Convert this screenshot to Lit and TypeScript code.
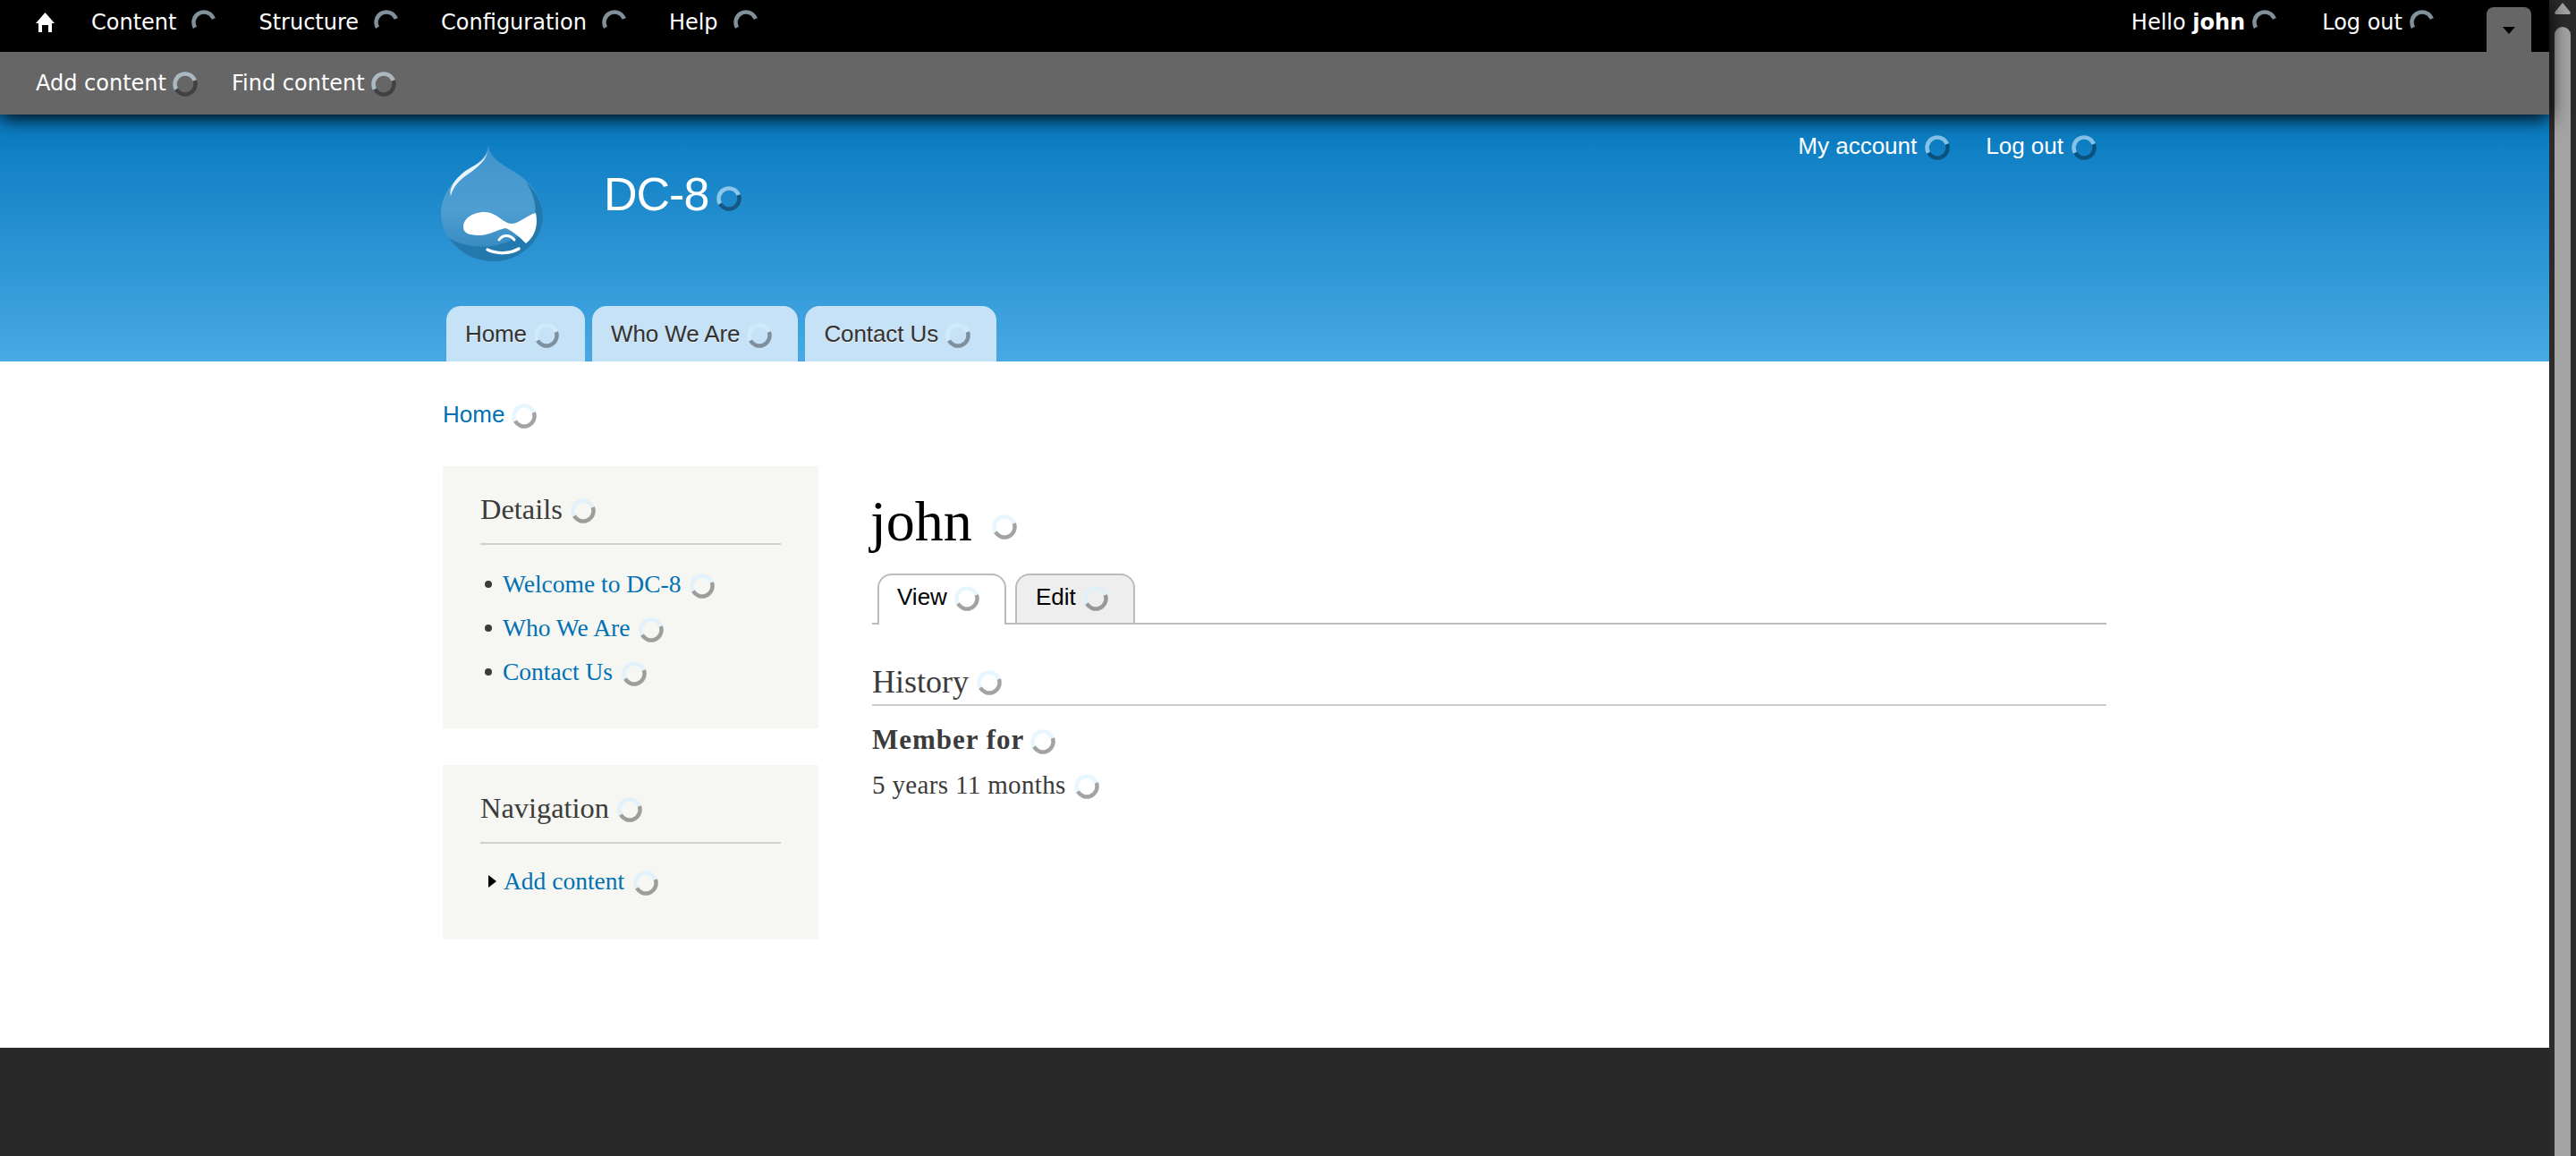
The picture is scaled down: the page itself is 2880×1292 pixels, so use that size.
import { LitElement, html, css } from "lit";
import { customElement } from "lit/decorators.js";

const sp = (cls = "") => html`<svg class="sp ${cls}" viewBox="0 0 28 28"><circle class="a" cx="14" cy="14" r="11.5" pathLength="360" stroke-dasharray="190 170" transform="rotate(150 14 14)"></circle><circle class="b" cx="14" cy="14" r="11.5" pathLength="360" stroke-dasharray="170 190" transform="rotate(-20 14 14)"></circle></svg>`;

@customElement("app-root")
export class AppRoot extends LitElement {
  static styles = css`
    :host { display: block; height: 1292px; overflow: hidden; font-family: "Liberation Serif", serif; color: #3b3b3b; background: #fff; }
    * { box-sizing: border-box; }
    a { text-decoration: none; color: inherit; }
    .page { display: flex; height: 1292px; }
    .col { width: 2850px; display: flex; flex-direction: column; }
    .sp { width: 28px; height: 28px; flex: none; fill: none; stroke-width: 4.5; margin-top: 4px; }
    .sp .a { stroke: rgba(215, 240, 255, 0.6); }
    .sp .b { stroke: rgba(0, 0, 0, 0.36); }
    .g { display: inline-flex; align-items: center; white-space: nowrap; }

    .toolbar { position: relative; z-index: 2; box-shadow: 0 4px 20px #000; font-family: "DejaVu Sans", Verdana, sans-serif; font-size: 24px; color: #fff; line-height: 30px; }
    .bar1 { height: 58px; background: #000; display: flex; align-items: flex-start; padding: 0 20px 0 40px; }
    .bar1 .g, .home { height: 50px; }
    .home { display: flex; align-items: center; margin-right: 41px; }
    .bar1 .g { gap: 17px; margin-right: 47px; }
    .bar1 .sp { margin-top: 0; }
    .right { margin-left: auto; display: flex; }
    .right .g { gap: 8px; margin-right: 50px; }
    .right .g:last-child { margin-right: 58px; }
    .drawer { width: 50px; height: 50px; margin-top: 8px; background: #666; border-radius: 8px 8px 0 0; display: flex; justify-content: center; padding-top: 22px; }
    .drawer svg { width: 14px; height: 8px; fill: #000; }
    .bar2 { height: 70px; background: #666; display: flex; align-items: center; gap: 38px; padding-left: 40px; }
    .bar2 .g { gap: 7px; }
    .bar2 .sp { margin-top: 2px; }

    .header { height: 276px; background: linear-gradient(#0779bf, #48a9e4); padding: 22px 0 0 480px; display: flex; flex-direction: column; justify-content: space-between; font-family: "Liberation Sans", Arial, sans-serif; }
    .htop { display: flex; width: 1864px; align-items: flex-start; }
    .logo { width: 140px; height: 150px; flex: none; }
    .site { margin: 37px 0 0 55px; font-size: 52px; line-height: 60px; color: #fff; gap: 9px; letter-spacing: -1px; }
    .site .sp { margin-top: 10px; }
    .sec { margin: -3px 0 0 auto; display: flex; gap: 40px; color: #fff; font-size: 26px; line-height: 30px; }
    .sec .g { gap: 9px; }
    .sec .sp { margin-top: 4px; }
    .tabs { display: flex; gap: 8px; margin-left: 19px; }
    .tab { height: 62px; background: #c6e2f6; border-radius: 16px 16px 0 0; padding: 0 29px 0 21px; font-size: 26px; color: #333; gap: 8px; text-shadow: 0 1px #eee; letter-spacing: -0.1px; }

    .content { padding: 39px 0 121px 495px; width: 2355px; }
    .crumb { height: 40px; font-family: "Liberation Sans", Arial, sans-serif; font-size: 26px; line-height: 40px; color: #0071b3; gap: 8px; display: flex; }
    .cols { display: flex; margin-top: 38px; gap: 60px; }
    .side { width: 420px; flex: none; display: flex; flex-direction: column; gap: 41px; }
    .box { background: #f6f6f2; padding: 28px 42px 39px; }
    .box.nav { padding-bottom: 41px; }
    .box h2 { margin: 0; font-size: 32.4px; font-weight: 400; line-height: 40px; height: 60px; padding-bottom: 18px; border-bottom: 2px solid #d0d0d0; display: flex; gap: 9px; align-items: center; color: #3b3b3b; }
    .box h2 .sp { margin-top: 4px; }
    .menu { list-style: none; margin: 19px 0 0; padding: 0 0 0 5px; font-size: 27.5px; line-height: 49px; }
    .nav .menu { margin-top: 17px; }
    .menu li { display: flex; align-items: center; height: 49px; }
    .bullet { width: 8px; height: 8px; border-radius: 50%; background: #3b3b3b; margin-right: 12px; margin-top: 1px; flex: none; }
    .arrow { width: 9px; height: 14px; margin: 0 8px 0 4px; fill: #000; flex: none; }
    .menu a { color: #0071b3; display: inline-flex; align-items: center; gap: 10px; }
    .main { width: 1380px; }
    h1 { margin: 27px 0 0 -2px; height: 70px; font-size: 64px; line-height: 70px; font-weight: 400; color: #000; display: flex; gap: 22px; align-items: center; }
    h1 .sp { margin-top: 12px; }
    .ptabs { margin-top: 23px; height: 57px; border-bottom: 2px solid #bbb; display: flex; align-items: flex-start; padding-left: 6px; gap: 10px; font-family: "Liberation Sans", Arial, sans-serif; font-size: 26px; color: #000; }
    .ptab { height: 57px; border: 2px solid #bbb; border-bottom: 0; border-radius: 16px 16px 0 0; background: #fff; padding: 0 28px 0 20px; position: relative; }
    .ptab.off { height: 55px; background: #eee; padding: 0 28px 0 21px; }
    .ptab .g { height: 48px; gap: 8px; }
    .main h2 { margin: 42px 0 0; font-size: 36px; line-height: 44px; height: 49px; font-weight: 400; padding-bottom: 3px; border-bottom: 2px solid #ccc; display: flex; gap: 9px; align-items: center; color: #3b3b3b; }
    .main h2 .sp { margin-top: 2px; }
    .lab { margin-top: 18px; font-weight: 700; font-size: 31px; line-height: 40px; letter-spacing: 1px; display: flex; align-items: center; gap: 7px; }
    .val { margin-top: 10px; font-size: 29px; line-height: 40px; letter-spacing: 0.35px; display: flex; align-items: center; gap: 9px; }
    .foot { flex: 1; background: #292929; }
    .scroll { width: 30px; flex: none; background: #2b2b2b; position: relative; overflow: hidden; padding: 3px 6px 0; }
    .scroll svg { width: 18px; height: 13px; fill: #a3a3a3; display: block; }
    .thumb { margin-top: 14px; height: 1400px; background: #a3a3a3; border-radius: 9px 9px 0 0; }
  `;

  render() {
    return html`<div class="page">
      <div class="col">
        <div class="toolbar">
          <div class="bar1">
            <a class="home"><svg width="21" height="22" viewBox="0 0 21 22" fill="#fff"><path d="M10.5 0 21 12H18V22H14V14H7V22H3V12H0Z"></path></svg></a>
            ${["Content", "Structure", "Configuration", "Help"].map((t) => html`<a class="g">${t}${sp()}</a>`)}
            <div class="right">
              <a class="g"><span>Hello <b>john</b></span>${sp()}</a>
              <a class="g">Log out${sp()}</a>
            </div>
            <div class="drawer"><svg viewBox="0 0 14 8"><path d="M0 0H14L7 8Z"></path></svg></div>
          </div>
          <div class="bar2">
            <a class="g">Add content${sp()}</a>
            <a class="g">Find content${sp()}</a>
          </div>
        </div>
        <div class="header">
          <div class="htop">
            <svg class="logo" viewBox="0 0 140 150">
              <defs>
                <linearGradient id="dg" x1="0" y1="0" x2="0" y2="1"><stop offset="0" stop-color="#3f94cc"></stop><stop offset="0.55" stop-color="#4f9ed1"></stop><stop offset="1" stop-color="#2f86bd"></stop></linearGradient>
                <filter id="bl"><feGaussianBlur stdDeviation="0.7"></feGaussianBlur></filter>
              </defs>
              <g filter="url(#bl)">
                <path d="M66 13C68 26 78 32 95 42C112 52 127 70 127 92C127 120 100 142 72 142C38 142 13 118 13 88C13 66 30 48 45 38C55 32 63 26 66 13Z" fill="url(#dg)"></path>
                <path d="M108 53C120 64 127 78 127 92C127 120 100 142 72 142C50 142 32 131 22 116C50 134 104 128 118 90C120 78 115 64 108 53Z" fill="#2379ae"></path>
                <path d="M65 20C63 31 50 40 40 47C32 53 26 60 24 69C21 60 31 47 42 40C52 34 61 30 65 20Z" fill="#e8f3fa"></path>
                <path d="M38 104C38 93 50 87 62 87C75 87 83 100 92 100C100 100 110 90 119 88C122 102 118 114 108 122C102 116 92 107 85 105C75 107 67 113 56 113C46 113 38 111 38 104Z" fill="#fff"></path>
                <path d="M65 129C75 134 90 134 100 128" fill="none" stroke="#fff" stroke-width="3.5" stroke-linecap="round"></path>
                <path d="M78 118C82 112 90 112 95 118" fill="none" stroke="#fff" stroke-width="3" stroke-linecap="round"></path>
              </g>
            </svg>
            <a class="g site">DC-8${sp()}</a>
            <div class="sec">
              <a class="g">My account${sp()}</a>
              <a class="g">Log out${sp()}</a>
            </div>
          </div>
          <div class="tabs">
            ${["Home", "Who We Are", "Contact Us"].map((t) => html`<a class="g tab">${t}${sp()}</a>`)}
          </div>
        </div>
        <div class="content">
          <a class="g crumb">Home${sp()}</a>
          <div class="cols">
            <div class="side">
              <div class="box">
                <h2>Details${sp()}</h2>
                <ul class="menu">
                  ${["Welcome to DC-8", "Who We Are", "Contact Us"].map((t) => html`<li><span class="bullet"></span><a>${t}${sp()}</a></li>`)}
                </ul>
              </div>
              <div class="box nav">
                <h2>Navigation${sp()}</h2>
                <ul class="menu">
                  <li><svg class="arrow" viewBox="0 0 9 14"><path d="M0 0 9 7 0 14Z"></path></svg><a>Add content${sp()}</a></li>
                </ul>
              </div>
            </div>
            <div class="main">
              <h1>john${sp()}</h1>
              <div class="ptabs">
                <a class="ptab"><span class="g">View${sp()}</span></a>
                <a class="ptab off"><span class="g">Edit${sp()}</span></a>
              </div>
              <h2>History${sp()}</h2>
              <div class="lab">Member for${sp()}</div>
              <div class="val">5 years 11 months${sp()}</div>
            </div>
          </div>
        </div>
        <div class="foot"></div>
      </div>
      <div class="scroll">
        <svg viewBox="0 0 18 13"><path d="M9 0 18 11 17 13H1L0 11Z"></path></svg>
        <div class="thumb"></div>
      </div>
    </div>`;
  }
}
